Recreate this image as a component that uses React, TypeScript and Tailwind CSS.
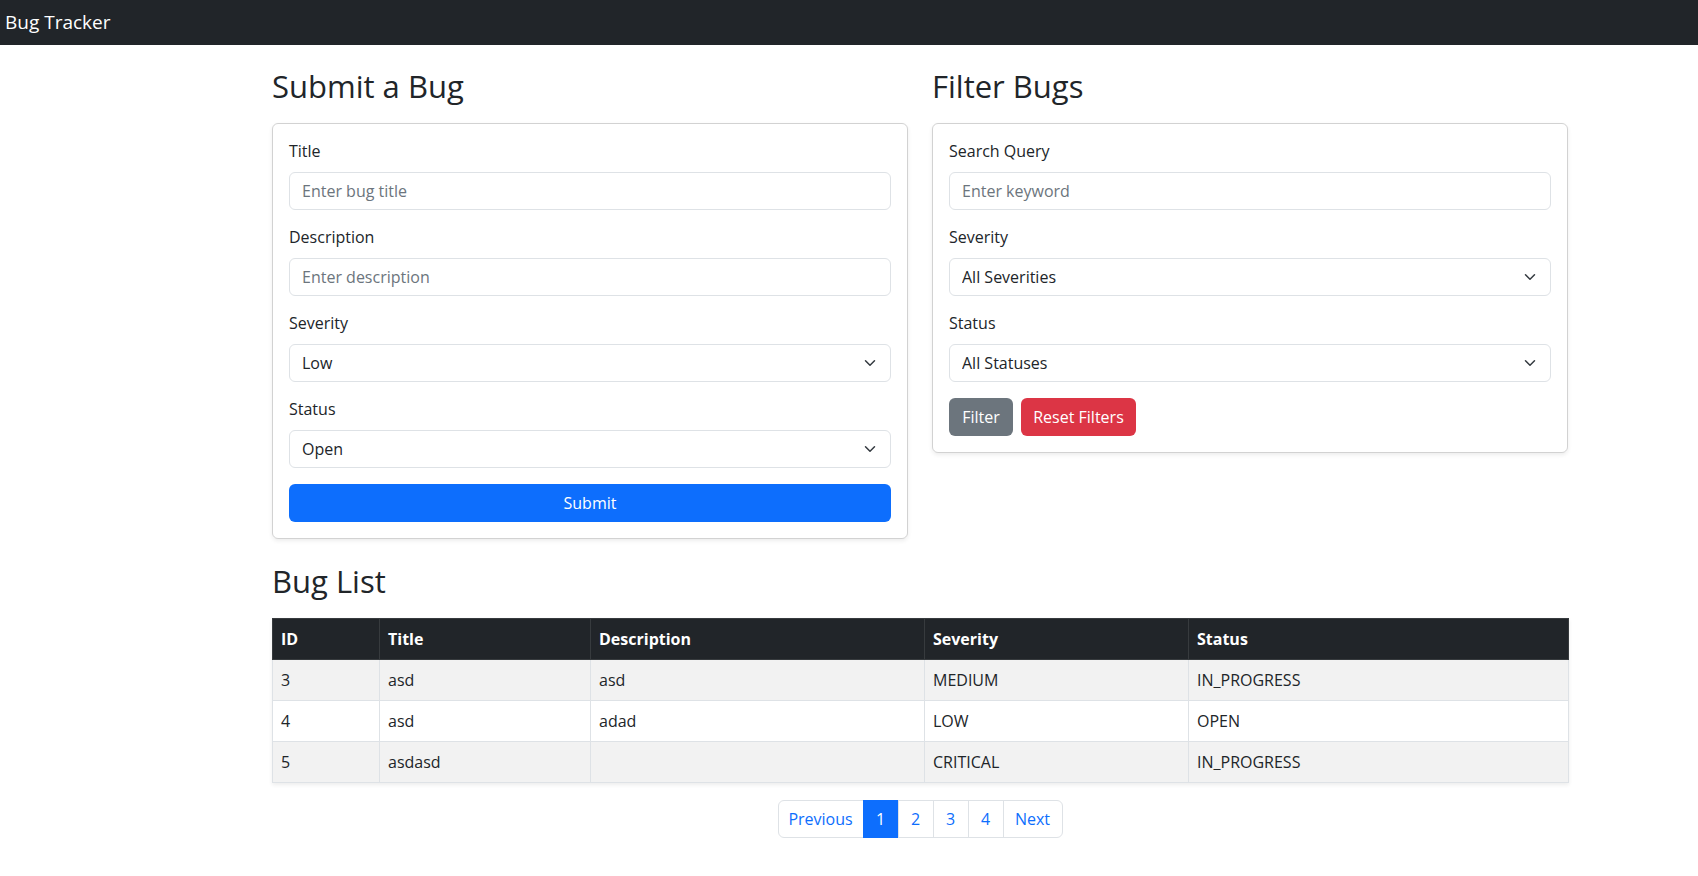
import { useState } from "react";

type Bug = {
  id: number;
  title: string;
  description: string;
  severity: string;
  status: string;
};

const BUGS: Bug[] = [
  { id: 3, title: "asd", description: "asd", severity: "MEDIUM", status: "IN_PROGRESS" },
  { id: 4, title: "asd", description: "adad", severity: "LOW", status: "OPEN" },
  { id: 5, title: "asdasd", description: "", severity: "CRITICAL", status: "IN_PROGRESS" },
];

const PAGES = [1, 2, 3, 4];

function Chevron() {
  return (
    <svg
      viewBox="0 0 16 16"
      width="12"
      height="12"
      fill="none"
      stroke="#343a40"
      strokeWidth="2"
      strokeLinecap="round"
      strokeLinejoin="round"
      className="pointer-events-none absolute right-[15px] top-1/2 -translate-y-1/2"
    >
      <path d="m2 5 6 6 6-6" />
    </svg>
  );
}

function Field({ label, children }: { label: string; children: React.ReactNode }) {
  return (
    <div className="mb-4">
      <label className="mb-2 block leading-[23px] pb-px">{label}</label>
      {children}
    </div>
  );
}

function TextInput({ placeholder }: { placeholder: string }) {
  return (
    <input
      type="text"
      placeholder={placeholder}
      className="block h-[38px] w-full rounded-md border border-[#dee2e6] bg-white px-3 text-base text-[#212529] placeholder:text-[#6c757d] focus:outline-none"
    />
  );
}

function Select({ options }: { options: string[] }) {
  return (
    <div className="relative">
      <select className="block h-[38px] w-full appearance-none rounded-md border border-[#dee2e6] bg-white pl-3 pr-9 text-base text-[#212529] focus:outline-none">
        {options.map((o) => (
          <option key={o}>{o}</option>
        ))}
      </select>
      <Chevron />
    </div>
  );
}

export default function App() {
  const [page, setPage] = useState(1);

  return (
    <div
      className="min-h-screen bg-white text-base text-[#212529]"
      style={{ fontFamily: '"Open Sans", "Noto Sans", sans-serif' }}
    >
      <nav className="flex h-[45px] items-center bg-[#212529] px-[5px]">
        <span className="text-[19px] text-white">Bug Tracker</span>
      </nav>

      <main className="ml-[272px] w-[1296px] pt-[22px]">
        <div className="grid grid-cols-2 gap-6">
          <section>
            <h2 className="mb-[18px] text-[31px] leading-[38px] font-normal">Submit a Bug</h2>
            <div className="rounded-md border border-black/[0.175] p-4 shadow-[0_2px_4px_rgba(0,0,0,0.075)]">
              <Field label="Title">
                <TextInput placeholder="Enter bug title" />
              </Field>
              <Field label="Description">
                <TextInput placeholder="Enter description" />
              </Field>
              <Field label="Severity">
                <Select options={["Low", "Medium", "High", "Critical"]} />
              </Field>
              <Field label="Status">
                <Select options={["Open", "In Progress", "Closed"]} />
              </Field>
              <button className="h-[38px] w-full rounded-md bg-[#0d6efd] text-white">Submit</button>
            </div>
          </section>

          <section>
            <h2 className="mb-[18px] text-[31px] leading-[38px] font-normal">Filter Bugs</h2>
            <div className="rounded-md border border-black/[0.175] p-4 shadow-[0_2px_4px_rgba(0,0,0,0.075)]">
              <Field label="Search Query">
                <TextInput placeholder="Enter keyword" />
              </Field>
              <Field label="Severity">
                <Select options={["All Severities", "Low", "Medium", "High", "Critical"]} />
              </Field>
              <Field label="Status">
                <Select options={["All Statuses", "Open", "In Progress", "Closed"]} />
              </Field>
              <div className="flex gap-2">
                <button className="h-[38px] w-[64px] rounded-md bg-[#6c757d] text-white">Filter</button>
                <button className="h-[38px] w-[115px] rounded-md bg-[#dc3545] text-white">Reset Filters</button>
              </div>
            </div>
          </section>
        </div>

        <h2 className="mt-[23px] mb-[18px] text-[31px] leading-[38px] font-normal">Bug List</h2>

        <table className="w-full table-fixed border-collapse shadow-[0_2px_4px_rgba(0,0,0,0.075)]">
          <colgroup>
            <col className="w-[107px]" />
            <col className="w-[211px]" />
            <col className="w-[334px]" />
            <col className="w-[264px]" />
            <col className="w-[380px]" />
          </colgroup>
          <thead>
            <tr className="h-[41px] bg-[#212529] text-left text-white">
              {["ID", "Title", "Description", "Severity", "Status"].map((h) => (
                <th key={h} className="border border-[#373b3e] px-2 font-bold">
                  {h}
                </th>
              ))}
            </tr>
          </thead>
          <tbody>
            {BUGS.map((b, i) => (
              <tr key={b.id} className={`h-[41px] ${i % 2 === 0 ? "bg-[#f2f2f2]" : "bg-white"}`}>
                <td className="border border-[#dee2e6] px-2">{b.id}</td>
                <td className="border border-[#dee2e6] px-2">{b.title}</td>
                <td className="border border-[#dee2e6] px-2">{b.description}</td>
                <td className="border border-[#dee2e6] px-2">{b.severity}</td>
                <td className="border border-[#dee2e6] px-2">{b.status}</td>
              </tr>
            ))}
          </tbody>
        </table>

        <div className="mt-[17px] flex justify-center">
          <ul className="flex">
            <li>
              <button className="h-[38px] w-[86px] rounded-l-md border border-[#dee2e6] text-[#0d6efd]">
                Previous
              </button>
            </li>
            {PAGES.map((p) => (
              <li key={p}>
                <button
                  onClick={() => setPage(p)}
                  className={`-ml-px h-[38px] w-[36px] border ${
                    p === page
                      ? "border-[#0d6efd] bg-[#0d6efd] text-white"
                      : "border-[#dee2e6] text-[#0d6efd]"
                  }`}
                >
                  {p}
                </button>
              </li>
            ))}
            <li>
              <button className="-ml-px h-[38px] w-[60px] rounded-r-md border border-[#dee2e6] text-[#0d6efd]">
                Next
              </button>
            </li>
          </ul>
        </div>
      </main>
    </div>
  );
}
